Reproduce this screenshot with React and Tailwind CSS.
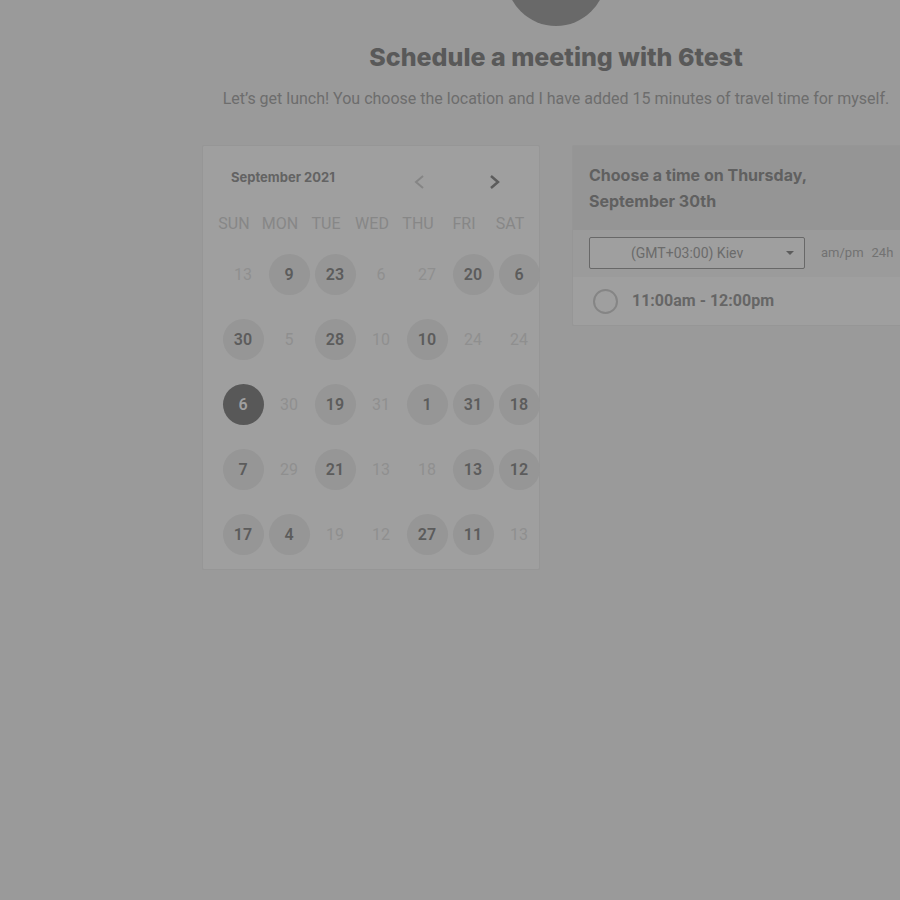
import React from "react";

const weekdays = ["SUN", "MON", "TUE", "WED", "THU", "FRI", "SAT"];

// Each entry is [day, state]: "" = unavailable, "open" = bookable, "selected" = chosen.
const days = [
  [13, ""], [9, "open"], [23, "open"], [6, ""], [27, ""], [20, "open"], [6, "open"],
  [30, "open"], [5, ""], [28, "open"], [10, ""], [10, "open"], [24, ""], [24, ""],
  [6, "selected"], [30, ""], [19, "open"], [31, ""], [1, "open"], [31, "open"], [18, "open"],
  [7, "open"], [29, ""], [21, "open"], [13, ""], [18, ""], [13, "open"], [12, "open"],
  [17, "open"], [4, "open"], [19, ""], [12, ""], [27, "open"], [11, "open"], [13, ""],
];

const dayStyles = {
  "": "text-[#8f8f8f]",
  open: "bg-[#969696] font-semibold text-[#5c5c5c]",
  selected: "bg-[#585858] font-semibold text-[#a0a0a0]",
};

function Calendar() {
  return (
    <section
      aria-label="Calendar"
      className="rounded-xs border border-[#969696] bg-[#9f9f9f] pb-0.5"
    >
      <div className="flex h-[60px] items-center pt-3 pl-7">
        <h2 className="w-[178px] pb-2 font-[Inter,sans-serif] text-[13px] font-bold text-[#636363]">
          September 2021
        </h2>
        <button type="button" aria-label="Previous month" className="flex w-5 justify-center text-[#858585]">
          <svg width="12" height="14" viewBox="0 0 12 14" fill="none" stroke="currentColor" strokeWidth="2">
            <path d="M10 1 3 7l7 6" />
          </svg>
        </button>
        <button type="button" aria-label="Next month" className="ml-14 flex w-5 justify-center text-[#5c5c5c]">
          <svg width="12" height="14" viewBox="0 0 12 14" fill="none" stroke="currentColor" strokeWidth="2.5">
            <path d="m2 1 7 6-7 6" />
          </svg>
        </button>
      </div>
      <div className="ml-2 grid h-9 grid-cols-[repeat(7,46px)] items-center text-center text-base text-[#878787]">
        {weekdays.map((d) => (
          <span key={d}>{d}</span>
        ))}
      </div>
      <div className="ml-[17px] grid grid-cols-[repeat(7,46px)]">
        {days.map(([day, state], i) => (
          <div key={i} className="flex h-[65px] items-center justify-center">
            <button
              type="button"
              disabled={state === ""}
              className={`flex size-[41px] items-center justify-center rounded-full text-base ${dayStyles[state]}`}
            >
              {day}
            </button>
          </div>
        ))}
      </div>
    </section>
  );
}

function TimePicker() {
  return (
    <section aria-label="Time" className="rounded-xs border border-[#969696] bg-[#9f9f9f]">
      <h2 className="bg-[#959595] px-4 py-4 font-[Inter,sans-serif] text-base leading-[26px] font-bold text-[#606060]">
        Choose a time on Thursday,
        <br />
        September 30th
      </h2>
      <div className="flex items-center bg-[#9b9b9b] px-4 pt-[7px] pb-2 text-[13px] text-[#727272]">
        <div className="relative w-[216px] shrink-0">
          <select
            aria-label="Time zone"
            className="h-8 w-full appearance-none rounded-xs border border-[#686868] bg-[#9f9f9f] pl-[41px] text-sm text-[#6b6b6b]"
          >
            <option>(GMT+03:00) Kiev</option>
          </select>
          <svg
            className="pointer-events-none absolute top-[14px] right-[11px]"
            width="8"
            height="4"
            viewBox="0 0 8 4"
            fill="#5c5c5c"
          >
            <path d="M0 0h8L4 4z" />
          </svg>
        </div>
        <button type="button" className="ml-4">am/pm</button>
        <button type="button" className="ml-2">24h</button>
      </div>
      <label className="flex h-12 items-center gap-[14px] px-5 text-base font-bold text-[#666666]">
        <input
          type="radio"
          name="slot"
          className="size-[25px] appearance-none rounded-full border-2 border-[#858585]"
        />
        11:00am - 12:00pm
      </label>
    </section>
  );
}

export default function App() {
  return (
    <div className="min-h-screen overflow-x-clip bg-[#9a9a9a] font-[Roboto,sans-serif]">
      <main className="-mr-[10px] pl-[202px]">
        <header className="flex flex-col items-center text-center">
          <div className="-mt-[74px] size-[100px] rounded-full bg-[#696969]" />
          <h1 className="mt-[13px] font-[Inter,sans-serif] text-[25px] leading-9 font-extrabold text-[#595959]">
            Schedule a meeting with 6test
          </h1>
          <p className="mt-3 text-base leading-6 whitespace-nowrap text-[#6d6d6d]">
            Let’s get lunch! You choose the location and I have added 15 minutes of travel time for myself.
          </p>
        </header>
        <div className="mt-[34px] grid grid-cols-2 items-start gap-8">
          <Calendar />
          <TimePicker />
        </div>
      </main>
    </div>
  );
}
